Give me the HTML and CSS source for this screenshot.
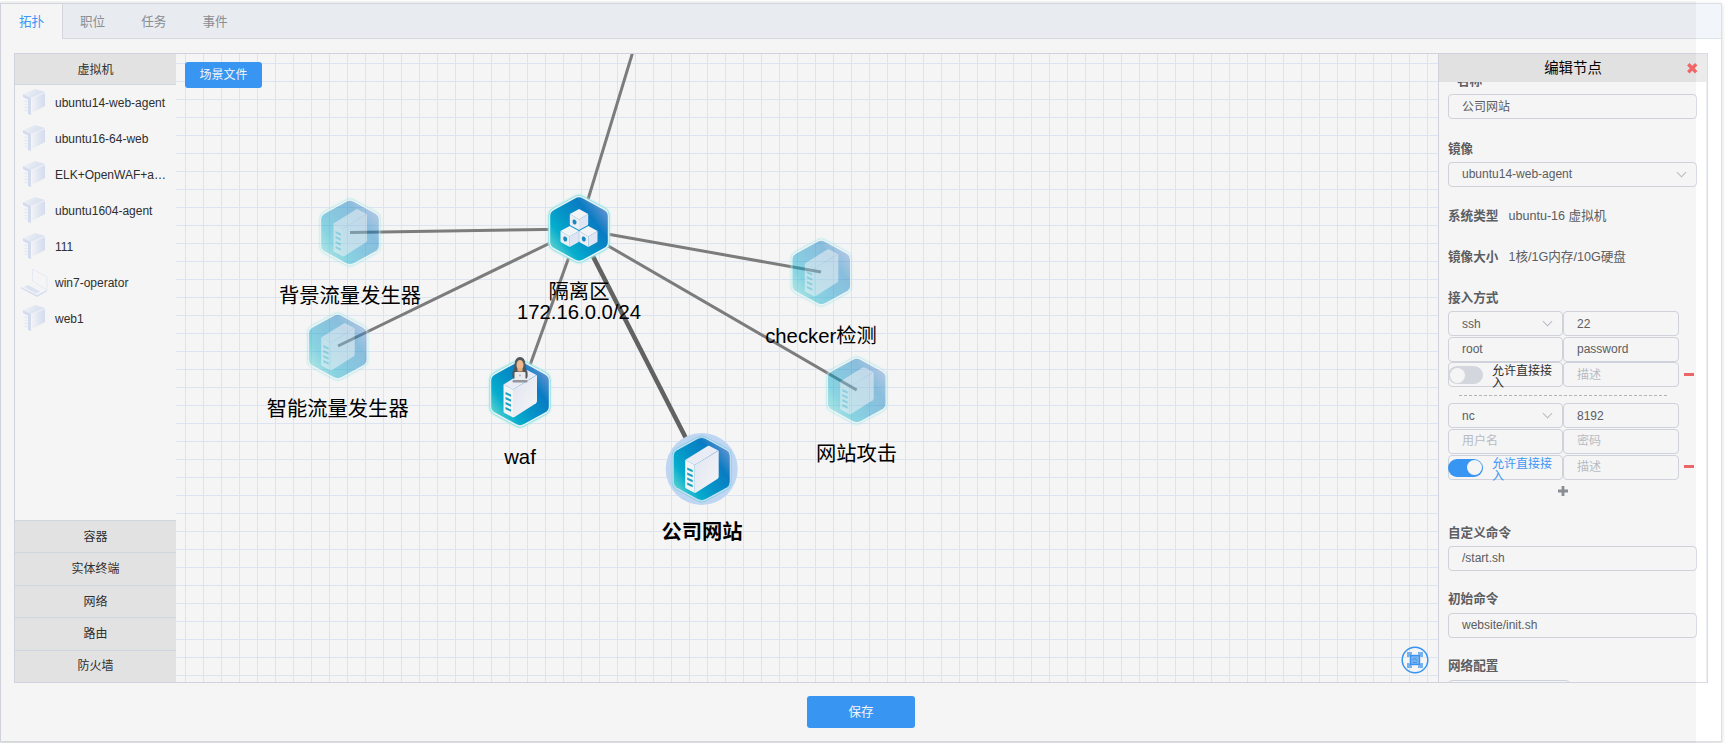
FILE: index.html
```html
<!DOCTYPE html>
<html lang="zh-CN">
<head>
<meta charset="utf-8">
<title>拓扑</title>
<link rel="stylesheet" href="styles.css">
</head>
<body>
<svg class="defs" width="0" height="0" aria-hidden="true">
  <defs>
    <linearGradient id="hexFill" x1="0.05" y1="0.9" x2="0.95" y2="0.15">
      <stop offset="0" stop-color="#6be2da"/>
      <stop offset="0.25" stop-color="#06b4d6"/>
      <stop offset="0.5" stop-color="#0697d0"/>
      <stop offset="0.75" stop-color="#0a82cb"/>
      <stop offset="1" stop-color="#6a9adb"/>
    </linearGradient>
    <linearGradient id="side" x1="0" y1="0" x2="1" y2="1">
      <stop offset="0" stop-color="#eaeffc"/>
      <stop offset="1" stop-color="#fff"/>
    </linearGradient>
    <linearGradient id="pale" x1="0" y1="0" x2="1" y2="0.3">
      <stop offset="0" stop-color="#fafcff"/>
      <stop offset="1" stop-color="#e0e9f9"/>
    </linearGradient>
    <linearGradient id="edge" x1="0" y1="0" x2="1" y2="0">
      <stop offset="0" stop-color="#fafcff"/>
      <stop offset="1" stop-color="#dbe5f8"/>
    </linearGradient>
    <filter id="glow" x="-20%" y="-20%" width="140%" height="140%"><feGaussianBlur stdDeviation="1"/></filter>
    <g id="hex">
      <path d="M-4 -32Q0 -34.500 4 -32L25.500 -20.500Q29.500 -18 29.500 -14V14Q29.500 18 25.500 20.500L4 32Q0 34.500 -4 32L-25.500 20.500Q-29.500 18 -29.500 14V-14Q-29.500 -18 -25.500 -20.500Z" fill="#c9f8f8" stroke="#b5f5f5" stroke-width="2.500" filter="url(#glow)"/>
      <path d="M-4 -32.500Q0 -35 4 -32.500L26 -20.700Q30.200 -18 30.200 -14V14Q30.200 18 26 20.700L4 32.500Q0 35 -4 32.500L-26 20.700Q-30.200 18 -30.200 14V-14Q-30.200 -18 -26 -20.700Z" fill="#f4feff" stroke="#86e6ea" stroke-width="0.700"/>
      <path d="M-4 -30.500Q0 -32.800 4 -30.500L25 -19Q28.800 -17 28.800 -13V13Q28.800 17 25 19L4 30.500Q0 32.800 -4 30.500L-25 19Q-28.800 17 -28.800 13V-13Q-28.800 -17 -25 -19Z" fill="url(#hexFill)"/>
    </g>
    <g id="server">
      <path d="M-16.500 -9L6 -23Q7 -23.500 8 -23L16.500 -18.500L-7 -4Z" fill="#f3f6fe"/>
      <path d="M-16.500 -9L-7 -4V24L-15.500 19.500Q-16.500 19 -16.500 18Z" fill="#fdfdff"/>
      <path d="M-7 -4L17 -18.500V7.500Q17 9 16 9.700L-5.500 23.500L-7 24Z" fill="url(#side)"/>
      <path d="M-14.500 -1.500l5.500 2.500v2.200l-5.500 -2.500zM-14.500 3.500l5.500 2.500v2.200l-5.500 -2.500zM-14.500 8.500l5.500 2.500v2.200l-5.500 -2.500zM-14.500 13.500l5.500 2.500v2.200l-5.500 -2.500z" fill="#17a9cb"/>
    </g>
    <g id="cube">
      <path d="M0 -10.500L9.200 -5.500L0 0L-9.200 -5.500Z" fill="#fcfdff"/>
      <path d="M-9.200 -5.500L0 0V10.500L-8.200 6Q-9.200 5.500 -9.200 4.500Z" fill="#f6f8fe"/>
      <path d="M9.200 -5.500L0 0V10.500L8.200 6Q9.200 5.500 9.200 4.500Z" fill="#e9effc"/>
      <ellipse cx="-4.500" cy="2.500" rx="1.900" ry="2.600" fill="#1b8fc9" transform="rotate(-20 -4.500 2.500)"/>
    </g>
    <g id="vm">
      <path d="M2 5L14 0L24 3L10 9Z" fill="url(#pale)"/>
      <path d="M2 5L10 9V26L7 25V10.500L2 8Z" fill="#dbe5f8"/>
      <path d="M3.500 12l3 1M3.500 15l3 1M3.500 18l3 1M3.500 21l3 1" stroke="#e9effb" stroke-width="1"/>
      <path d="M11 9L24 4V17L11 24Z" fill="url(#edge)"/>
    </g>
    <g id="laptop">
      <path d="M11.500 0V12L26 21V8Z" fill="#fff" stroke="#e8eefa" stroke-width="0.700"/>
      <path d="M0 18L10 13.500L26 22L16 27.500Z" fill="#fdfeff"/>
      <path d="M0 18L16 26L26 21V22.500L16 28L0 19.500Z" fill="#dfe8f9"/>
      <path d="M3 18L7 16L19 22.500L15 24.500Z" fill="#e4ecfa"/>
    </g>
  </defs>
</svg>

<div class="card">
  <nav class="tabs">
    <a class="tab active">拓扑</a>
    <a class="tab">职位</a>
    <a class="tab">任务</a>
    <a class="tab">事件</a>
  </nav>

  <main class="designer">
    <aside class="sidebar">
      <h3 class="group first">虚拟机</h3>
      <ul class="images">
        <li><svg viewBox="0 0 27 28"><use href="#vm"/></svg><span>ubuntu14-web-agent</span></li>
        <li><svg viewBox="0 0 27 28"><use href="#vm"/></svg><span>ubuntu16-64-web</span></li>
        <li><svg viewBox="0 0 27 28"><use href="#vm"/></svg><span>ELK+OpenWAF+a…</span></li>
        <li><svg viewBox="0 0 27 28"><use href="#vm"/></svg><span>ubuntu1604-agent</span></li>
        <li><svg viewBox="0 0 27 28"><use href="#vm"/></svg><span>111</span></li>
        <li><svg viewBox="0 0 27 28"><use href="#laptop"/></svg><span>win7-operator</span></li>
        <li><svg viewBox="0 0 27 28"><use href="#vm"/></svg><span>web1</span></li>
      </ul>
      <h3 class="group">容器</h3>
      <h3 class="group">实体终端</h3>
      <h3 class="group">网络</h3>
      <h3 class="group">路由</h3>
      <h3 class="group last">防火墙</h3>
    </aside>

    <section class="canvas">
      <svg class="graph" viewBox="176 54 1262 628">
        <g class="links">
          <path d="M579 229L632.500 53"/>
          <path d="M579 229L350 232.500"/>
          <path d="M579 229L338 346"/>
          <path d="M579 229L520 393"/>
          <path d="M579 229L821 272"/>
          <path d="M579 229L856.700 390"/>
          <path class="strong" d="M579 229L701.700 469"/>
        </g>
        <g class="faded">
          <g transform="translate(350 232.500)"><use href="#hex"/><use class="body" href="#server"/></g>
          <g transform="translate(337.700 346.500)"><use href="#hex"/><use class="body" href="#server"/></g>
          <g transform="translate(821.300 272.500)"><use href="#hex"/><use class="body" href="#server"/></g>
          <g transform="translate(856.700 390.500)"><use href="#hex"/><use class="body" href="#server"/></g>
        </g>
        <g transform="translate(579 229)">
          <use href="#hex"/>
          <use href="#cube" x="0" y="-9.500"/>
          <use href="#cube" x="-9.300" y="7.500"/>
          <use href="#cube" x="9.300" y="7.500"/>
        </g>
        <g transform="translate(520 393.500)">
          <use href="#hex"/><use href="#server"/>
          <path d="M-7.500 -21.500Q-5.500 -24 -5.500 -29Q-5 -36.500 0 -36.500Q5 -36.500 5.500 -29Q5.500 -24 7.500 -21.500Q8 -17 7 -15H-7Q-8 -17 -7.500 -21.500Z" fill="#56595e"/>
          <ellipse cx="0" cy="-28.500" rx="3.500" ry="5" fill="#f6c196"/>
          <path d="M-2.500 -25h5v3h-5z" fill="#eeb285"/>
          <rect x="-5.500" y="-21.500" width="11" height="8" rx="1" fill="#f2f4f6"/>
          <circle cx="0" cy="-18" r="1" fill="#b4babf"/>
          <rect x="-7.500" y="-13.500" width="15" height="2.500" rx="1" fill="#9a9ea4"/>
        </g>
        <circle cx="701.700" cy="469" r="36" fill="#c6dffb"/>
        <g transform="translate(701.700 469)">
          <path d="M-4 -32Q0 -34.500 4 -32L25.500 -20.500Q29.500 -18 29.500 -14V14Q29.500 18 25.500 20.500L4 32Q0 34.500 -4 32L-25.500 20.500Q-29.500 18 -29.500 14V-14Q-29.500 -18 -25.500 -20.500Z" fill="#c9e6fa" stroke="#8ad8ef" stroke-width="0.900"/>
          <path d="M-4 -30.500Q0 -32.800 4 -30.500L25 -19Q28.500 -17 28.500 -13V13Q28.500 17 25 19L4 30.500Q0 32.800 -4 30.500L-25 19Q-28.500 17 -28.500 13V-13Q-28.500 -17 -25 -19Z" fill="url(#hexFill)" stroke="#e4f4ff" stroke-width="0.800"/>
          <use href="#server"/>
        </g>
        <g class="labels">
          <text x="350" y="302.500">背景流量发生器</text>
          <text x="337.700" y="415.500">智能流量发生器</text>
          <text x="579" y="298.500">隔离区</text>
          <text x="579" y="318.700">172.16.0.0/24</text>
          <text x="520" y="464">waf</text>
          <text x="821" y="342.700">checker检测</text>
          <text x="856.500" y="461">网站攻击</text>
          <text class="selected" x="702" y="538.500">公司网站</text>
        </g>
      </svg>
      <button class="btn scene">场景文件</button>
      <svg class="fit" viewBox="0 0 28 28">
        <circle cx="14" cy="14" r="12.800" fill="none" stroke="#3a9bfa" stroke-width="1.500"/>
        <g fill="#7db9f7">
          <path d="M6 6h5v2.500l-1 0 2 2-1.500 1.500-2-2v1H6zM22 6v5h-2.500v-1l-2 2-1.500-1.500 2-2h-1V6zM6 22v-5h2.500v1l2-2 1.500 1.500-2 2h1V22zM22 22h-5v-2.500h1l-2-2 1.500-1.500 2 2v-1H22z"/>
          <rect x="9.500" y="9.500" width="9" height="9" stroke="#3a9bfa" stroke-width="1.400"/>
        </g>
        <path d="M11.800 14.500l2-2.500 2.400 2.800M12 16.500h4" fill="none" stroke="#3a9bfa" stroke-width="0.900"/>
      </svg>
    </section>

    <aside class="panel">
      <header class="panel-head">
        <span>编辑节点</span>
        <svg class="close" viewBox="0 0 10 10"><path d="M1.200 1.200L8.800 8.800M8.800 1.200L1.200 8.800" stroke="#fb6b6b" stroke-width="3.200"/></svg>
      </header>
      <div class="form">
        <div class="label name">名称</div>
        <div class="input title">公司网站</div>
        <div class="label gap">镜像</div>
        <div class="input select">ubuntu14-web-agent<i class="arrow"></i></div>
        <div class="row first"><b>系统类型</b><span>ubuntu-16 虚拟机</span></div>
        <div class="row"><b>镜像大小</b><span>1核/1G内存/10G硬盘</span></div>
        <div class="label access">接入方式</div>
        <div class="grid">
          <div class="input select low">ssh<i class="arrow"></i></div><div class="input low">22</div>
          <div class="input">root</div><div class="input">password</div>
          <div class="input allow"><i class="switch"></i><span>允许直接接入</span></div><div class="input hint low">描述</div>
          <i class="minus"></i>
        </div>
        <div class="divider"></div>
        <div class="grid">
          <div class="input select low">nc<i class="arrow"></i></div><div class="input low">8192</div>
          <div class="input hint">用户名</div><div class="input hint">密码</div>
          <div class="input allow on"><i class="switch"></i><span>允许直接接入</span></div><div class="input hint">描述</div>
          <i class="minus"></i>
        </div>
        <svg class="plus" viewBox="0 0 10 10"><path d="M5 0V10M0 5H10" stroke="#909399" stroke-width="2.800"/></svg>
        <div class="label cmd">自定义命令</div>
        <div class="input">/start.sh</div>
        <div class="label gap2">初始命令</div>
        <div class="input">website/init.sh</div>
        <div class="label gap2">网络配置</div>
        <div class="input short"></div>
      </div>
    </aside>
  </main>

  <footer class="foot"><button class="btn save">保存</button></footer>
</div>
<div class="shade"></div>
</body>
</html>
```

FILE: styles.css
```css
* { box-sizing: border-box; }

body {
  margin: 0;
  height: 743px;
  overflow: hidden;
  position: relative;
  background: #fff;
  font-family: "Liberation Sans", "Noto Sans CJK SC", sans-serif;
  font-size: 12px;
  color: #303133;
}

.defs { position: absolute; }

.card {
  width: 1722px;
  height: 739px;
  margin-top: 3px;
  border: 1px solid #dcdfe6;
  border-left-color: #d8dbe6;
  box-shadow: 0 2px 4px rgba(0, 0, 0, .12), 0 0 6px rgba(0, 0, 0, .04);
}

/* tabs */
.tabs {
  display: flex;
  height: 35px;
  background: #f2f6fa;
  border-bottom: 1px solid #dde1e8;
}
.tab {
  height: 34px;
  padding: 0 18px;
  font-size: 12.6px;
  line-height: 36px;
  white-space: nowrap;
  color: #909399;
}
.tab.active {
  width: 62px;
  height: 35px;
  background: #fff;
  border-right: 1px solid #dcdfe6;
  color: #409eff;
}
.tab.active + .tab { padding-left: 17px; }

/* designer frame */
.designer {
  display: flex;
  width: 1694px;
  height: 630px;
  margin: 14px 0 0 13px;
  border: 1px solid #d9dce6;
}

.sidebar {
  display: flex;
  flex-direction: column;
  width: 161px;
  flex: none;
}
.group {
  flex: none;
  height: 32.400px;
  margin: 0;
  border-top: 1px solid #d9dfea;
  background: #ececec;
  font-size: 12px;
  font-weight: 400;
  line-height: 33px;
  text-align: center;
}
.group.first {
  height: 31px;
  border-top: 0;
  border-bottom: 1px solid #d9dfea;
}
.group.last { line-height: 31px; }
.images {
  flex: 1;
  margin: 0;
  padding: 0;
  list-style: none;
}
.images li {
  display: flex;
  align-items: center;
  height: 36px;
  padding: 0 10px 0 6px;
}
.images svg {
  width: 27px;
  height: 28px;
  margin-right: 7px;
  flex: none;
}
.images span { white-space: nowrap; }

/* canvas */
.canvas {
  position: relative;
  flex: 1;
  min-width: 0;
  background-image:
    linear-gradient(90deg, #e5eefb 1px, transparent 1px),
    linear-gradient(#e5eefb 1px, transparent 1px);
  background-size: 18px 18px;
  background-position: 9px 9px;
}
.graph { display: block; width: 1262px; height: 628px; }
.links path { fill: none; stroke: #828282; stroke-width: 3; }
.links .strong { stroke: #666; stroke-width: 4.500; }
.faded > g { opacity: .45; }
.faded .body { opacity: .55; }
.labels text {
  font-size: 20.300px;
  text-anchor: middle;
  fill: #000;
}
.labels .selected { font-weight: 700; }

.btn {
  border: 0;
  border-radius: 3px;
  background: #3b9cfb;
  color: #fff;
  font-family: inherit;
  font-size: 12px;
  padding: 0 0 3px;
}
.scene {
  position: absolute;
  left: 9px;
  top: 8px;
  width: 77px;
  height: 26px;
}
.fit {
  position: absolute;
  left: 1225px;
  top: 592px;
  width: 28px;
  height: 28px;
}

/* properties panel */
.panel {
  display: flex;
  flex-direction: column;
  width: 269px;
  flex: none;
  border-left: 1px solid #d9dce6;
}
.panel-head {
  position: relative;
  height: 28px;
  flex: none;
  background: #ebebeb;
  font-size: 14.400px;
  line-height: 28px;
  text-align: center;
  color: #000;
}
.close {
  position: absolute;
  left: 248px;
  top: 9px;
  width: 10.500px;
  height: 10.500px;
}
.form {
  flex: 1;
  min-height: 0;
  overflow: hidden;
  padding-left: 9px;
  border-right: 1px solid #eeeff3;
  color: #606266;
}
.label {
  height: 18px;
  font-size: 12.600px;
  font-weight: 700;
  line-height: 18px;
}
.label.name { margin: -10px 0 4px 9px; }
.label.gap { margin: 21px 0 4px; }
.label.gap2 { margin: 19px 0 5px; }
.label.access { margin: 23px 0 4px; }
.label.cmd { margin: 28.200px 0 4.500px; }

.input {
  position: relative;
  width: 249px;
  height: 25px;
  padding-left: 13px;
  border: 1px solid #d9dbe4;
  border-radius: 4px;
  line-height: 23px;
  white-space: nowrap;
}
.input.title, .input.low { line-height: 25px; }
.input.hint { color: #c0c4cc; }
.input.short { width: 122px; }
.arrow {
  position: absolute;
  right: 11px;
  top: 6px;
  width: 7px;
  height: 7px;
  border: solid #c0c4cc;
  border-width: 0 1px 1px 0;
  transform: rotate(45deg);
}
.row {
  display: flex;
  gap: 10px;
  height: 18px;
  margin-top: 23px;
  font-size: 12.600px;
  line-height: 18px;
}
.row.first { margin-top: 20px; }

.grid {
  position: relative;
  display: grid;
  grid-template-columns: 115px 116px;
  row-gap: .7px;
}
.grid .input { width: auto; }
.allow {
  display: flex;
  align-items: flex-start;
  padding: 3px 0 0 0;
  color: #303133;
}
.allow span {
  width: 62px;
  margin-left: 9px;
  margin-top: -1px;
  line-height: 12px;
  white-space: normal;
}
.switch {
  width: 35px;
  height: 18px;
  margin-left: -1px;
  padding: 1.500px;
  flex: none;
  display: flex;
  border-radius: 9px;
  background: #dcdfe6;
}
.switch::before {
  content: "";
  width: 15px;
  height: 15px;
  border-radius: 50%;
  background: #fff;
}
.on { color: #409eff; }
.on .switch { background: #3b9cfb; justify-content: flex-end; }
.minus {
  position: absolute;
  left: 236px;
  top: 62px;
  width: 10px;
  height: 3px;
  background: #f56c6c;
}
.divider {
  width: 208px;
  height: 16px;
  margin-left: 11px;
  background: repeating-linear-gradient(90deg, #bcbcbc 0 3px, transparent 3px 5px) 0 8px / 100% 1px no-repeat;
}
.plus {
  display: block;
  width: 10px;
  height: 10px;
  margin: 6px 0 0 110px;
}

.foot {
  display: flex;
  justify-content: center;
  padding-top: 13px;
}
.save {
  width: 108px;
  height: 32px;
  font-size: 12.600px;
}

/* translucent layer above the page, ends before the right edge */
.shade {
  position: absolute;
  left: 0;
  top: 1px;
  width: 1696px;
  height: 742px;
  background: rgba(0, 0, 0, .04);
  pointer-events: none;
}
```
